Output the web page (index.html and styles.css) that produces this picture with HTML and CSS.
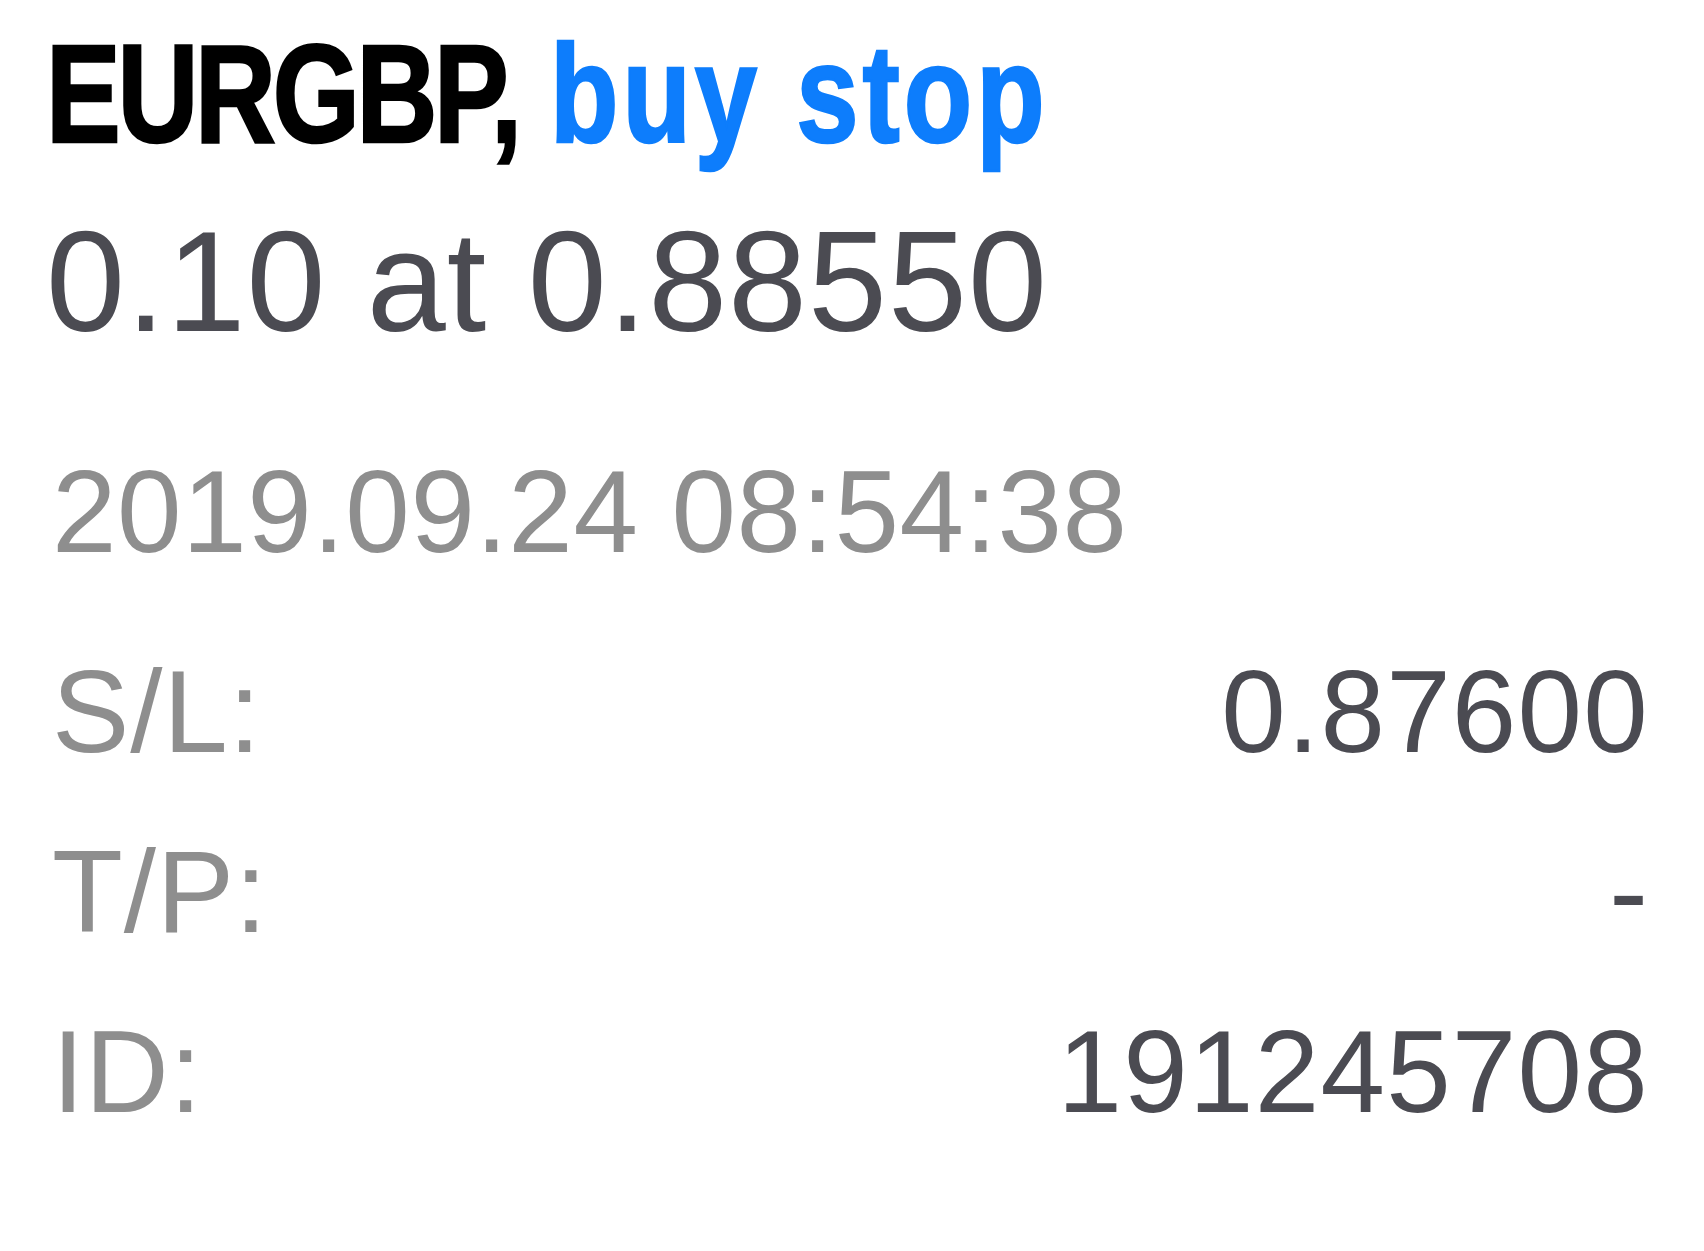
FILE: index.html
```html
<!DOCTYPE html>
<html lang="en">
<head>
  <meta charset="UTF-8">
  <meta name="viewport" content="width=device-width, initial-scale=1.0">
  <title>EURGBP, buy stop</title>
  <link rel="stylesheet" href="styles.css">
</head>
<body>
  <div class="order">
    <h1 class="title"><span class="condensed"><span class="symbol">EURGBP,</span> <span class="type">buy stop</span></span></h1>
    <p class="volume">0.10 at 0.88550</p>

    <!-- Order details -->
    <div class="details">
      <p class="time">2019.09.24 08:54:38</p>
      <div class="row">
        <span class="label">S/L:</span>
        <span class="value">0.87600</span>
      </div>
      <div class="row">
        <span class="label">T/P:</span>
        <span class="value">-</span>
      </div>
      <div class="row">
        <span class="label">ID:</span>
        <span class="value">191245708</span>
      </div>
    </div>
  </div>
</body>
</html>
```

FILE: styles.css
```css
body {
  margin: 0;
  background-color: #fff;
  font-family: "Liberation Sans", Arial, sans-serif;
  color: #4b4b52;
}
.order {
  padding: 24px 56px 0 46px;
}
.title {
  margin: 0;
  font-weight: 700;
  font-size: 140px;
  line-height: 140px;
  color: #000;
  white-space: nowrap;
}
/* no condensed face installed, so squeeze the bold one */
.condensed {
  display: inline-block;
  transform: scaleX(0.8);
  transform-origin: left center;
  -webkit-text-stroke: 2.5px currentColor;
}
.symbol {
  letter-spacing: -4.1px;
}
.type {
  color: #0d7dfc;
  letter-spacing: 5px;
}
.volume {
  margin: 47px 0 0;
  font-size: 142px;
  line-height: 142px;
  letter-spacing: 1px;
}
.details {
  margin-top: 69px;
  padding-left: 6px;
  font-size: 116px;
  line-height: 180px;
  letter-spacing: 0.8px;
}
.time {
  margin: 0 0 20px;
  color: #8e8e8e;
  letter-spacing: 0.6px;
}
.row {
  display: flex;
  justify-content: space-between;
}
.label {
  color: #8e8e8e;
}
.value {
  color: #4b4b52;
  letter-spacing: 1.2px;
  margin-right: -1px;
}
```
